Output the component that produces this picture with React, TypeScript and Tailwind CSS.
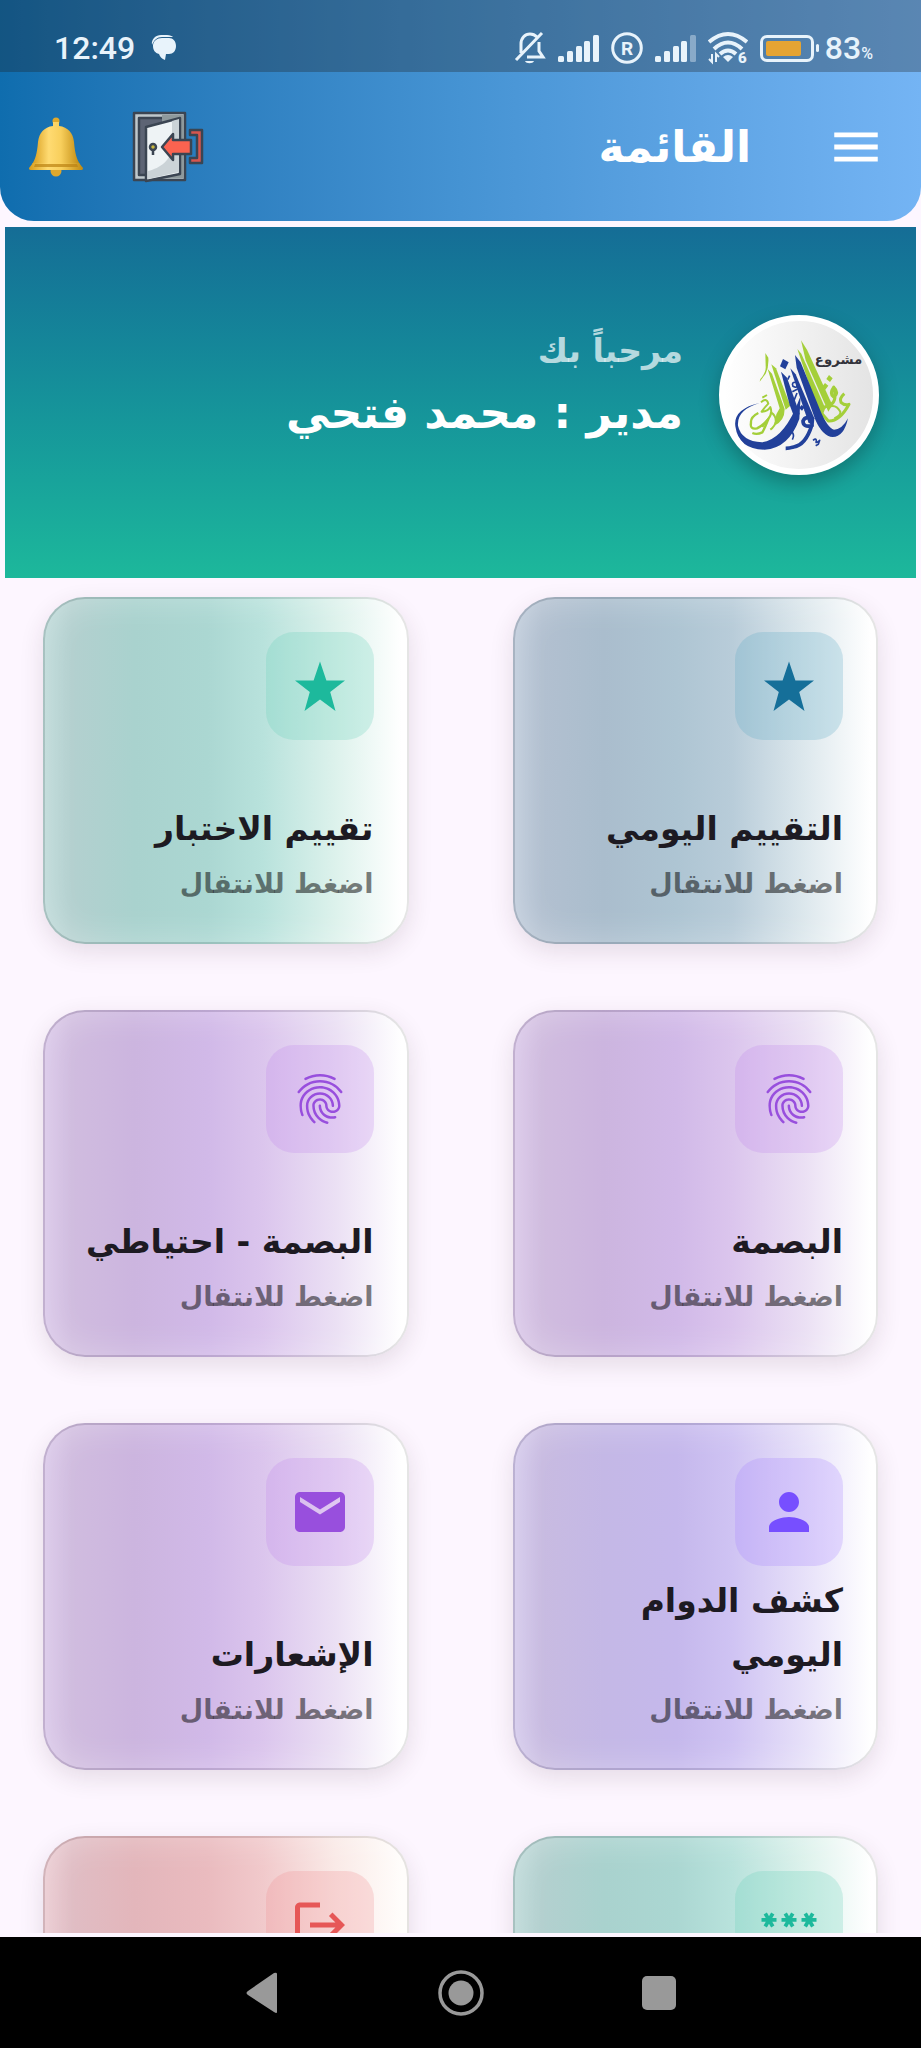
import { MdFingerprint, MdLogout, MdMail, MdMenu, MdPassword, MdPerson } from "react-icons/md";
import type { ReactNode } from "react";

const StarIcon = () => (
  <svg viewBox="0 0 60 60" className="h-[60px] w-[60px]" fill="currentColor">
    <path d="M30 5.500 36.400 24.500H55L40.200 36 45.500 55 30 43.500 14.500 55 19.800 36 5 24.500H23.600Z" />
  </svg>
);

const palettes = {
  blue: {
    card: "bg-[linear-gradient(270deg,#fff_2%,#dde8ed_20%,#b8ccd9_40%,#aec5d3_55%,#aabdcd_75%,#b2c0d0_92%,#bcc9d9_100%)]",
    tile: "bg-[#59a9c2]/25 text-[#156f99]",
  },
  green: {
    card: "bg-[linear-gradient(270deg,#fff_2%,#ddf2ec_20%,#b8e2dc_40%,#abd7d2_55%,#a9d2ce_75%,#b3d0cf_92%,#bbd8d7_100%)]",
    tile: "bg-[#64cfb8]/25 text-[#1db99c]",
  },
  purple: {
    card: "bg-[linear-gradient(270deg,#fff_2%,#ebe0f4_20%,#dbc5ed_40%,#d1b9e8_55%,#ccb5df_75%,#d0bcdf_92%,#d8c5e8_100%)]",
    tile: "bg-[#be82ea]/25 text-[#984fdd]",
  },
  indigo: {
    card: "bg-[linear-gradient(270deg,#fff_2%,#e7e1f9_20%,#cfc3f3_40%,#c5b8ec_55%,#c4b8e6_75%,#c8bbe1_92%,#d2c7eb_100%)]",
    tile: "bg-[#a57eff]/25 text-[#774fff]",
  },
  red: {
    card: "bg-[linear-gradient(270deg,#fffdfb_2%,#faeae7_20%,#f1c9cb_40%,#eabbbf_55%,#e3b6bb_75%,#e0bdc4_92%,#eac9d0_100%)]",
    tile: "bg-[#f08b90]/25 text-[#e65757]",
  },
};

type Item = { title?: string; label?: string; icon: ReactNode; palette: keyof typeof palettes };

const items: Item[] = [
  { title: "التقييم اليومي", icon: <StarIcon />, palette: "blue" },
  { title: "تقييم الاختبار", icon: <StarIcon />, palette: "green" },
  { title: "البصمة", icon: <MdFingerprint size={60} />, palette: "purple" },
  { title: "البصمة - احتياطي", icon: <MdFingerprint size={60} />, palette: "purple" },
  { title: "كشف الدوام اليومي", icon: <MdPerson size={60} />, palette: "indigo" },
  { title: "الإشعارات", icon: <MdMail size={60} />, palette: "purple" },
  { label: "كلمة المرور", icon: <MdPassword size={60} />, palette: "green" },
  { label: "تسجيل الخروج", icon: <MdLogout size={60} />, palette: "red" },
];

export default function App() {
  return (
    <div
      dir="rtl"
      className="flex h-screen flex-col overflow-hidden bg-[#fdf6ff] font-['DejaVu_Sans',sans-serif]"
    >
      {/* Status bar and app bar share one gradient */}
      <header className="shrink-0 overflow-hidden rounded-b-[34px] bg-linear-to-r from-[#0f6dae] via-[#4593d3] to-[#74b4f4]">
        <StatusBar />
        <div className="flex h-[149px] items-center pr-9 pl-7">
          <button aria-label="فتح القائمة" className="text-white">
            <MdMenu size={58} />
          </button>
          <h1 className="mr-[76px] text-[44px] leading-[60px] font-bold text-white">القائمة</h1>
          <div className="mr-auto flex items-center gap-12">
            <button aria-label="تسجيل الخروج">
              <DoorIcon />
            </button>
            <button aria-label="الإشعارات">
              <BellIcon />
            </button>
          </div>
        </div>
      </header>

      {/* Greeting */}
      <section className="mx-[5px] mt-1.5 flex h-[351px] shrink-0 items-center gap-9 bg-linear-to-b from-[#156d96] to-[#1db89b] pr-[37px] pb-4">
        <div className="h-40 w-40 shrink-0 overflow-hidden rounded-full border-[6px] border-white bg-linear-to-r from-white to-[#e4e4e4] shadow-[0_8px_20px_rgba(0,0,0,0.25)]">
          <Logo />
        </div>
        <div className="flex flex-col pb-5">
          <p className="text-[33px] leading-[56px] font-bold text-white/70">مرحباً بك</p>
          <p className="text-[44px] leading-[68px] font-bold text-white">مدير : محمد فتحي</p>
        </div>
      </section>

      {/* Menu grid */}
      <main className="mb-1 min-h-0 grow overflow-hidden px-[43px] pt-[19px]">
        <nav className="grid grid-cols-2 gap-x-[104px] gap-y-[66px]">
          {items.map((item, index) => (
            <MenuCard key={index} {...item} />
          ))}
        </nav>
      </main>

      <NavigationBar />
    </div>
  );
}

const MenuCard = (props: Item) => {
  const colors = palettes[props.palette];

  return (
    <a
      href="#"
      aria-label={props.label}
      className={`flex min-h-[347px] flex-col items-start justify-between rounded-[42px] border-2 border-black/10 bg-origin-border px-[33px] pt-[33px] pb-[30px] shadow-[0_8px_24px_rgba(60,30,50,0.12),inset_0_0_36px_rgba(255,255,255,0.3)] ${colors.card}`}
    >
      <span className={`flex h-[108px] w-[108px] items-center justify-center rounded-[28px] ${colors.tile}`}>
        {props.icon}
      </span>
      {props.title && (
        <span className="flex flex-col">
          <span className="text-[33px] leading-[54px] font-bold text-[#1d1a22]">{props.title}</span>
          <span className="text-[27px] leading-[56px] font-bold text-black/50">اضغط للانتقال</span>
        </span>
      )}
    </a>
  );
};

const StatusBar = () => (
  <div dir="ltr" className="flex h-[72px] items-center bg-[#1e1e1e]/30 pt-6 pr-12 pl-[54px] font-[Roboto,sans-serif] text-[#e8f3fb]">
    <span className="text-[32px] leading-[38px] font-medium">12:49</span>
    <svg viewBox="0 0 26 26" className="ml-4 h-[26px] w-[26px]" fill="currentColor">
      <path d="M1 10C0 4 5 0 10 0h6c3 0 5 1 6 2H11C6 2 3 5 1 10Z" />
      <path d="M11 3h7c4 0 7 3 7 8s-3 8-7 8h-3l-1 6c-3-1-5-3-6-6-4-1-6-4-6-8 0-5 4-8 9-8Z" />
    </svg>

    <div className="ml-auto flex items-center gap-3">
      {/* Muted bell */}
      <svg viewBox="0 0 32 34" className="h-[34px] w-8" fill="none" stroke="currentColor" strokeWidth="3">
        <path d="M2 29 28 2M7 22V13c0-6 4-10 9-10 3 0 5 1 7 3M13 26h16l-4-6v-9" />
        <path d="M11 30h9c-1 3-8 3-9 0Z" fill="currentColor" stroke="none" />
      </svg>
      <SignalBars />
      <svg viewBox="0 0 32 32" className="h-8 w-8" fill="none" stroke="currentColor" strokeWidth="3">
        <circle cx="16" cy="16" r="14.300" />
        <text x="16" y="23" textAnchor="middle" fontSize="19" fontWeight="700" fill="currentColor" stroke="none">R</text>
      </svg>
      <SignalBars weak />
      {/* Wi-Fi */}
      <svg viewBox="0 0 40 36" className="h-9 w-10" fill="none" stroke="currentColor" strokeWidth="4">
        <path d="M1 12Q20-4 39 12M6 19Q20 6 34 19M12 24Q20 17 28 24" />
        <path d="M15 27q5-4 10 0l-5 5Z" fill="currentColor" stroke="none" />
        <path d="M4 24v8l-3-3M8 32v-8l3 3" strokeWidth="2" />
        <text x="30" y="33" fontSize="15" fontWeight="900" fill="currentColor" stroke="none">6</text>
      </svg>
      <div className="flex items-center gap-[2px]">
        <div className="h-[27px] w-[54px] rounded-[7px] border-[3px] border-current p-[3px]">
          <div className="h-full w-[83%] rounded-xs bg-[#e5a433]"></div>
        </div>
        <div className="h-2 w-[3px] rounded-xs bg-current"></div>
        <div className="ml-1 flex items-baseline font-medium">
          <span className="text-[32px] leading-[38px]">83</span>
          <span className="text-base leading-[18px]">%</span>
        </div>
      </div>
    </div>
  </div>
);

const SignalBars = (props: { weak?: boolean }) => (
  <svg viewBox="0 0 41 27" className="h-[27px] w-[41px]" fill="currentColor">
    <rect x="0" y="21" width="6" height="6" rx="1.500" />
    <rect x="9" y="16" width="6" height="11" rx="1.500" />
    <rect x="18" y="11" width="6" height="16" rx="1.500" />
    <rect x="26" y="6" width="6" height="21" rx="1.500" />
    <rect x="35" y="0" width="6" height="27" rx="1.500" opacity={props.weak ? 0.4 : 1} />
  </svg>
);

const BellIcon = () => (
  <svg viewBox="0 0 56 60" className="h-[60px] w-14">
    <defs>
      <linearGradient id="bell">
        <stop offset="0" stopColor="#d79c1c" />
        <stop offset="0.350" stopColor="#ffdb72" />
        <stop offset="0.600" stopColor="#f8cf5c" />
        <stop offset="1" stopColor="#c08a12" />
      </linearGradient>
    </defs>
    <circle cx="28" cy="54" r="5.500" fill="#dea72c" />
    <circle cx="28" cy="4" r="3.500" fill="#e0a92c" />
    <path d="M25 5h6v4c9 1 14 7 15 16 1 12 3 18 6 22H4c3-4 5-10 6-22C11 16 16 10 25 9Z" fill="url(#bell)" />
    <path d="M5 46h46l4 5c0 2-1 2-3 2H4c-2 0-3 0-3-2Z" fill="url(#bell)" />
    <path d="M7 47h42l1 3H6Z" fill="#bb8212" opacity="0.700" />
  </svg>
);

const DoorIcon = () => (
  <svg viewBox="0 0 72 72" className="h-[72px] w-[72px]" stroke="#3b4552" strokeWidth="2.500" strokeLinejoin="round">
    <path d="M2 2h51v67H2Z" fill="#bfc8cc" />
    <path d="M7 7h41v57H7Z" fill="#5d6474" />
    <path d="M30 4h22v63H30Z" fill="#8e999c" stroke="none" />
    <path d="M14 16 48 7v56L14 70Z" fill="#eef3f5" />
    <path d="M40 10 47 8v53L16 68v-8c12-3 24-10 24-27Z" fill="#cbd3d7" stroke="none" />
    <path d="M58 19h12v33H58v-5h7V24h-7Z" fill="#d7564f" />
    <path d="M30 36 41 23v6h18v14H41v6Z" fill="#fb6350" />
    <circle cx="21" cy="36" r="3" fill="#c9b840" />
    <path d="M21 39v5" />
  </svg>
);

const Logo = () => (
  <svg viewBox="76 94 444 444" className="h-full w-full" fill="none" strokeLinejoin="round">
    {/* Green strokes */}
    <g fill="#a4cf3a">
      <path d="m304 152 18 28 76 166-12 20-68-154Z" />
      <path d="m293 178 12 14 72 164-8 20-20-30Z" />
      <path d="m215 224 14 12 43 112-14 12Z" />
      <path d="m204 238 13 14 38 106q0 36-31 50l6-34 10-18Z" />
      <path d="m197 190 9 14q2 28-8 48l-18 24 2-8q18-20 16-38Z" />
      <path d="m388 256 11 10-8 11-11-9ZM376 280l10 8-9 12-10-9Z" />
    </g>
    <g stroke="#a4cf3a" strokeWidth="9">
      <path d="M402 292q18 18 0 30-14-10 0-30 12 42-10 54l-22 8" />
      <path d="M434 312q-16 14-10 26 10 10 24 6-28 52-62 50l-26-30" />
      <path d="M388 352q20-10 34 14 2 12-18 20" strokeWidth="6" />
      <path d="M176 370q-24 12-22 30-4 20 18 16 20-10 34-28-10 26-18 40-16 8-30 2" strokeWidth="7" />
      <path d="M184 338q16-16 22 4-12 12-20 24 18 0 26-14 8 20-8 38l-16 22" strokeWidth="6" />
      <path d="M214 368q16 10 14 28-2 14-16 24m-10-104-14 8" strokeWidth="6" />
    </g>
    {/* Blue strokes */}
    <g fill="#22409a">
      <path d="m250 208 17 10-10 21-16-9Z" />
      <path d="M180 340q-80 18-73 70 10 70 88 70 72-4 104-92l4-70-16 40q-42 92-100 100-62-4-72-50-4-48 65-68Z" />
      <path d="m244 246 18 18 38 108-12 22-18-48Z" />
      <path d="m286 196 17 22 58 142q22 54 42 60 24 0 42-34-12 56-46 56-30-2-52-52l-56-156Z" />
      <path d="m272 236 16 18 56 132-2 26-16-14Z" />
      <path d="m306 346 9 7-8 10-9-8Zm16 8 9 7-8 10-9-8Z" />
    </g>
    <g stroke="#22409a" strokeWidth="9">
      <path d="M342 390q-24-14-32 4 0 20 26 14-18 58-54 64-14 4-24 4" strokeWidth="11" />
      <path d="M290 278q-16-2-10 12 14 8 12-8m-14 24 16-8m-2 12-16 40m-6-92-6 12" strokeWidth="5" />
      <path d="M276 426q10 10 2 24M340 452q10-8 10 2-4 10 10-2l-4 12-8 4" strokeWidth="5" />
    </g>
    <text x="488" y="224" fontSize="40" fontWeight="700" fill="#33333b" direction="rtl" textAnchor="start">
      مشروع
    </text>
  </svg>
);

const NavigationBar = () => (
  <footer dir="ltr" className="flex h-[111px] shrink-0 items-center justify-center gap-[152px] bg-black text-[#999]">
    <button aria-label="رجوع">
      <svg viewBox="0 0 46 46" className="h-[46px] w-[46px]" fill="currentColor">
        <path d="M37 4v38q0 2-3 0L8 25q-3-2 0-4L34 3q3-1 3 1Z" />
      </svg>
    </button>
    <button aria-label="الرئيسية">
      <svg viewBox="0 0 46 46" className="h-[46px] w-[46px]" fill="currentColor">
        <circle cx="23" cy="23" r="21" fill="none" stroke="currentColor" strokeWidth="3.500" />
        <circle cx="23" cy="23" r="12.500" />
      </svg>
    </button>
    <button aria-label="التطبيقات الأخيرة">
      <svg viewBox="0 0 46 46" className="h-[46px] w-[46px]" fill="currentColor">
        <rect x="6" y="6" width="34" height="34" rx="5" />
      </svg>
    </button>
  </footer>
);
